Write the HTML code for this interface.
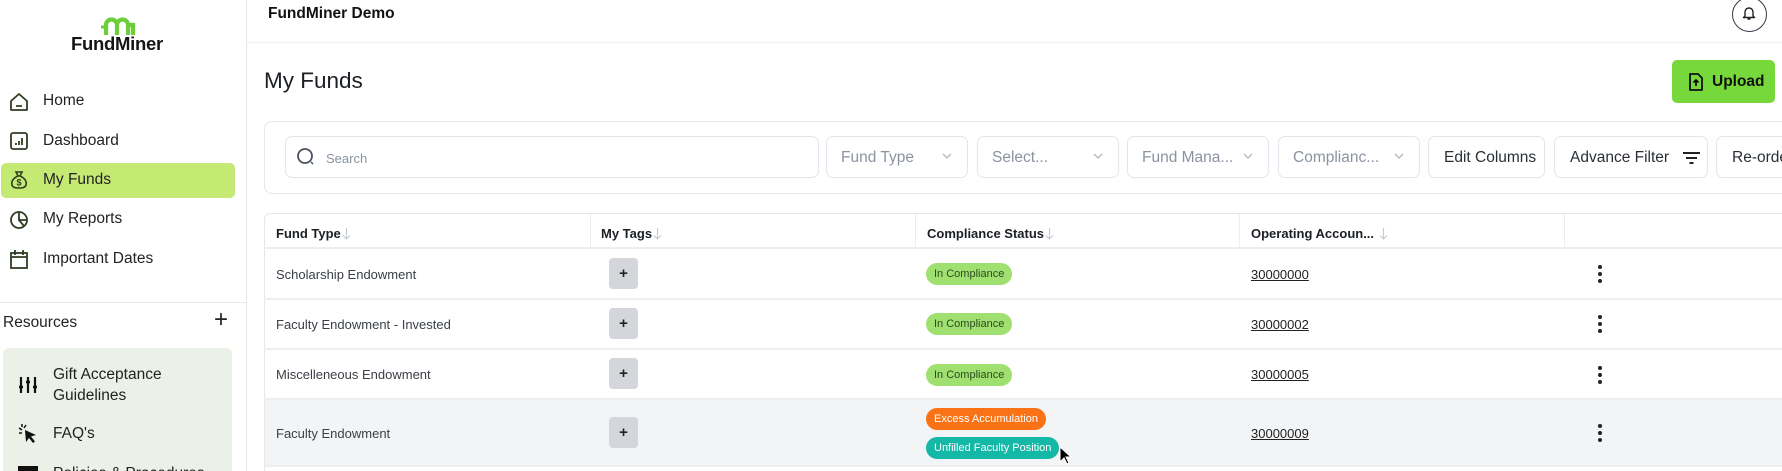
<!DOCTYPE html>
<html style="width:1782px;height:471px;overflow:hidden"><head><meta charset="utf-8"><style>
*{box-sizing:border-box;margin:0;padding:0}
body{width:1782px;height:471px;overflow:hidden;background:#fff;font-family:"Liberation Sans",sans-serif;color:#1f2328;position:relative}
.a{position:absolute}
.nav{position:absolute;left:43px;font-size:15.5px;color:#222}
.ico{position:absolute;left:9px;width:20px;height:20px}
.dd{position:absolute;top:136px;height:42px;border:1px solid #e2e6ec;border-radius:7px;font-size:15.5px;color:#8a93a0;padding:12px 0 0 14px;background:#fff}
.dd .ch{position:absolute;right:14px;top:13px}
.btn{position:absolute;top:136px;height:42px;border:1px solid #e2e6ec;border-radius:7px;font-size:15.5px;color:#2a2f36;padding:12px 0 0 15px;background:#fff}
.th{position:absolute;top:226px;font-size:13px;font-weight:bold;color:#1b1f24}
.th svg{margin-left:1px;vertical-align:-2px}
.hl{position:absolute;left:264px;right:0;height:2px;background:#eceef1}
.td{position:absolute;left:276px;font-size:13px;color:#3a3f46}
.tag{position:absolute;left:609px;width:29px;height:31px;background:#d4d6db;border-radius:4px;font-size:15px;font-weight:bold;text-align:center;line-height:31px;color:#222}
.pill{position:absolute;left:926px;height:22px;border-radius:11px;font-size:11px;padding:0 8px;line-height:22px}
.g{background:#9fe070;color:#2d4a1f}
.acc{position:absolute;left:1251px;font-size:13px;color:#222;text-decoration:underline}
.dots{position:absolute;left:1598px;width:4px}
.dots i{display:block;width:4px;height:4px;border-radius:2px;background:#222;margin-bottom:3px}
</style></head><body>
<div class="a" style="left:246px;top:0;width:1px;height:471px;background:#e3e6ea"></div>
<svg class="a" style="left:100px;top:13px" width="36" height="23" viewBox="0 0 36 23"><path d="M6 22V12a5.5 5.5 0 0 1 11 0v10M17 12a5.5 5.5 0 0 1 11 0v10" fill="none" stroke="#6ccf3a" stroke-width="4.2"/><path d="M28 12h5v10" fill="none" stroke="#6ccf3a" stroke-width="4.2"/><path d="M1 14h6" stroke="#6ccf3a" stroke-width="3"/></svg>
<div class="a" style="left:71px;top:33px;font-size:18.5px;font-weight:bold;color:#151515;letter-spacing:-0.3px">FundMiner</div>

<svg class="ico" style="top:92px" viewBox="0 0 20 20"><path d="M2 9L10 2l8 7v9H2z M7 14h6" fill="none" stroke="#2f3d22" stroke-width="1.8" stroke-linejoin="round"/></svg>
<div class="nav" style="top:92px">Home</div>
<svg class="ico" style="top:131px" viewBox="0 0 20 20"><rect x="2" y="2" width="16" height="16" rx="2" fill="none" stroke="#2f3d22" stroke-width="1.8"/><path d="M7 14v-2M10 14v-4M13 14V7" stroke="#2f3d22" stroke-width="1.8"/></svg>
<div class="nav" style="top:132px">Dashboard</div>
<div class="a" style="left:1px;top:163px;width:234px;height:35px;background:#c5ea74;border-radius:5px"></div>
<svg class="ico" style="top:170px" viewBox="0 0 20 20"><path d="M7 2h6l-2 4h-2z M9 6C4 8 2 12 3 15c1 3 4 3 7 3s6 0 7-3c1-3-1-7-6-9" fill="none" stroke="#2f3d22" stroke-width="1.6"/><text x="10" y="15.5" font-size="9" font-weight="bold" text-anchor="middle" fill="#2f3d22" font-family="Liberation Sans">$</text></svg>
<div class="nav" style="top:171px">My Funds</div>
<svg class="ico" style="top:210px" viewBox="0 0 20 20"><circle cx="10" cy="10" r="8" fill="none" stroke="#2f3d22" stroke-width="1.8"/><path d="M10 2v8h8M10 10l5 6" fill="none" stroke="#2f3d22" stroke-width="1.8"/></svg>
<div class="nav" style="top:210px">My Reports</div>
<svg class="ico" style="top:249px" viewBox="0 0 20 20"><rect x="2" y="4" width="16" height="15" fill="none" stroke="#2f3d22" stroke-width="1.8"/><path d="M2 8h16M6 1v5M14 1v5" stroke="#2f3d22" stroke-width="1.8"/></svg>
<div class="nav" style="top:250px">Important Dates</div>

<div class="a" style="left:0;top:302px;width:246px;height:1px;background:#e3e6ea"></div>
<div class="a" style="left:3px;top:314px;font-size:15.5px;color:#222">Resources</div>
<div class="a" style="left:214px;top:308px;font-size:24px;color:#222;line-height:24px">+</div>
<div class="a" style="left:3px;top:348px;width:229px;height:130px;background:#ecf1e7;border-radius:6px"></div>
<svg class="a" style="left:18px;top:376px" width="20" height="18" viewBox="0 0 20 18"><path d="M3 1v16M10 1v16M17 1v16" stroke="#111" stroke-width="2.2"/><path d="M1 11h4M8 6h4M15 11h4" stroke="#111" stroke-width="2.5"/></svg>
<div class="a" style="left:53px;top:364px;font-size:15.5px;color:#222;line-height:21px">Gift Acceptance<br>Guidelines</div>
<svg class="a" style="left:18px;top:424px" width="20" height="20" viewBox="0 0 20 20"><path d="M7 6l11 5-5 1.5 4 5-2 1.5-4-5-3 4z" fill="#111"/><path d="M1 4l3 2M4 0v3M1 9h3M8 1L6 4" stroke="#111" stroke-width="1.5"/></svg>
<div class="a" style="left:53px;top:425px;font-size:15.5px;color:#222">FAQ's</div>
<div class="a" style="left:18px;top:466px;width:20px;height:5px;background:#111"></div>
<div class="a" style="left:53px;top:465px;font-size:15.5px;color:#222">Policies &amp; Procedures</div>

<div class="a" style="left:268px;top:5px;font-size:15.5px;font-weight:bold;color:#111">FundMiner Demo</div>
<div class="a" style="left:247px;top:42px;right:0;height:1px;background:#f0f1f3"></div>
<div class="a" style="left:1732px;top:-3px;width:35px;height:35px;border:1.3px solid #333a44;border-radius:50%"></div>
<svg class="a" style="left:1742px;top:6px" width="14" height="15" viewBox="0 0 14 15"><path d="M3 10V6a4 4 0 0 1 8 0v4l1.5 1.5h-11z M5.5 13h3" fill="none" stroke="#222" stroke-width="1.4" stroke-linejoin="round"/></svg>

<div class="a" style="left:264px;top:68px;font-size:22.5px;color:#1b1f24">My Funds</div>
<div class="a" style="left:1672px;top:60px;width:103px;height:43px;background:#76d83a;border-radius:5px"></div>
<svg class="a" style="left:1688px;top:73px" width="16" height="18" viewBox="0 0 16 18"><path d="M2 1h8l4 4v12H2z M8 13V7M5.5 9.5L8 7l2.5 2.5" fill="none" stroke="#111" stroke-width="1.8" stroke-linejoin="round"/></svg>
<div class="a" style="left:1712px;top:73px;font-size:15.5px;font-weight:bold;color:#111">Upload</div>

<div class="a" style="left:264px;top:121px;width:1530px;height:73px;border:1px solid #e3e6eb;border-radius:8px"></div>
<div class="dd" style="left:285px;width:534px;padding-left:40px;font-size:13px;padding-top:14px">Search</div>
<svg class="a" style="left:296px;top:147px" width="20" height="20" viewBox="0 0 20 20"><circle cx="9" cy="9" r="7" fill="none" stroke="#4a5360" stroke-width="1.8"/><path d="M15 15l2 2" stroke="#4a5360" stroke-width="1.5"/></svg>
<div class="dd" style="left:826px;width:142px">Fund Type<svg class="ch" width="12" height="12" viewBox="0 0 12 12"><path d="M2 4l4 4 4-4" fill="none" stroke="#b0b6bf" stroke-width="1.3"/></svg></div>
<div class="dd" style="left:977px;width:142px">Select...<svg class="ch" width="12" height="12" viewBox="0 0 12 12"><path d="M2 4l4 4 4-4" fill="none" stroke="#b0b6bf" stroke-width="1.3"/></svg></div>
<div class="dd" style="left:1127px;width:142px">Fund Mana...<svg class="ch" width="12" height="12" viewBox="0 0 12 12"><path d="M2 4l4 4 4-4" fill="none" stroke="#b0b6bf" stroke-width="1.3"/></svg></div>
<div class="dd" style="left:1278px;width:142px">Complianc...<svg class="ch" width="12" height="12" viewBox="0 0 12 12"><path d="M2 4l4 4 4-4" fill="none" stroke="#b0b6bf" stroke-width="1.3"/></svg></div>
<div class="btn" style="left:1428px;width:117px">Edit Columns</div>
<div class="btn" style="left:1554px;width:154px">Advance Filter<svg class="a" style="left:128px;top:14px" width="17" height="13" viewBox="0 0 17 13"><path d="M0 2h17M3 7h11M6.5 12h4" stroke="#222" stroke-width="2"/></svg></div>
<div class="btn" style="left:1716px;width:100px">Re-order</div>

<div class="a" style="left:264px;top:213px;width:1530px;height:270px;border:1px solid #e3e6eb;border-radius:6px"></div>
<div class="a" style="left:265px;top:400px;right:0;height:66px;background:#f3f4f6"></div>
<div class="hl" style="top:247px"></div>
<div class="hl" style="top:298px"></div>
<div class="hl" style="top:348px"></div>
<div class="hl" style="top:398px"></div>
<div class="hl" style="top:465px"></div>
<div class="a" style="left:590px;top:214px;width:1px;height:33px;background:#eceef1"></div>
<div class="a" style="left:915px;top:214px;width:1px;height:33px;background:#eceef1"></div>
<div class="a" style="left:1239px;top:214px;width:1px;height:33px;background:#eceef1"></div>
<div class="a" style="left:1564px;top:214px;width:1px;height:33px;background:#eceef1"></div>
<div class="th" style="left:276px">Fund Type<svg width="9" height="13" viewBox="0 0 9 13"><path d="M4.5 1v11M1 8.5l3.5 3.5 3.5-3.5" fill="none" stroke="#c5cad2" stroke-width="1.1"/></svg></div>
<div class="th" style="left:601px">My Tags<svg width="9" height="13" viewBox="0 0 9 13"><path d="M4.5 1v11M1 8.5l3.5 3.5 3.5-3.5" fill="none" stroke="#c5cad2" stroke-width="1.1"/></svg></div>
<div class="th" style="left:927px">Compliance Status<svg width="9" height="13" viewBox="0 0 9 13"><path d="M4.5 1v11M1 8.5l3.5 3.5 3.5-3.5" fill="none" stroke="#c5cad2" stroke-width="1.1"/></svg></div>
<div class="th" style="left:1251px">Operating Accoun... <svg width="9" height="13" viewBox="0 0 9 13"><path d="M4.5 1v11M1 8.5l3.5 3.5 3.5-3.5" fill="none" stroke="#c5cad2" stroke-width="1.1"/></svg></div>

<div class="td" style="top:267px">Scholarship Endowment</div>
<div class="td" style="top:317px">Faculty Endowment - Invested</div>
<div class="td" style="top:367px">Miscelleneous Endowment</div>
<div class="td" style="top:426px">Faculty Endowment</div>
<div class="tag" style="top:258px">+</div>
<div class="tag" style="top:308px">+</div>
<div class="tag" style="top:358px">+</div>
<div class="tag" style="top:417px">+</div>
<div class="pill g" style="top:263px">In Compliance</div>
<div class="pill g" style="top:313px">In Compliance</div>
<div class="pill g" style="top:364px">In Compliance</div>
<div class="pill" style="top:408px;background:#f97316;color:#fff">Excess Accumulation</div>
<div class="pill" style="top:437px;background:#14b8a6;color:#fff">Unfilled Faculty Position</div>
<svg class="a" style="left:1059px;top:446px" width="13" height="19" viewBox="0 0 13 19"><path d="M1 1v15l4-4 3 6 2-1-3-6h5z" fill="#000" stroke="#fff" stroke-width="1"/></svg>
<div class="acc" style="top:267px">30000000</div>
<div class="acc" style="top:317px">30000002</div>
<div class="acc" style="top:367px">30000005</div>
<div class="acc" style="top:426px">30000009</div>
<div class="dots" style="top:265px"><i></i><i></i><i></i></div>
<div class="dots" style="top:315px"><i></i><i></i><i></i></div>
<div class="dots" style="top:366px"><i></i><i></i><i></i></div>
<div class="dots" style="top:424px"><i></i><i></i><i></i></div>
</body></html>
